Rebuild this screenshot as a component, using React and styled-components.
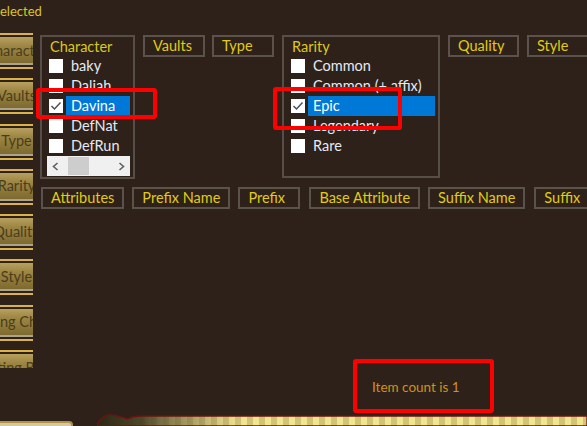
import React from "react";
import styled, { createGlobalStyle } from "styled-components";

const GlobalStyle = createGlobalStyle`
  html, body {
    margin: 0;
    padding: 0;
    background: #2e2119;
  }
`;

const sideTabs = [
  "Character",
  "Vaults",
  "Type",
  "Rarity",
  "Quality",
  "Style",
  "Sorting Choice",
  "Sorting Rank",
];

const characters = [
  { name: "baky" },
  { name: "Daliah" },
  { name: "Davina", checked: true },
  { name: "DefNat" },
  { name: "DefRun" },
];

const rarities = [
  { name: "Common" },
  { name: "Common (+ affix)" },
  { name: "Epic", checked: true },
  { name: "Legendary" },
  { name: "Rare" },
];

const Page = styled.div`
  position: relative;
  width: 587px;
  height: 426px;
  overflow: hidden;
  display: flex;
  flex-direction: column;
  background: #2e2119;
  font-family: Lato, "Open Sans", sans-serif;
  font-size: 14.5px;
`;

const Header = styled.div`
  flex: none;
  height: 33px;
  box-sizing: border-box;
  padding-top: 3px;
  font-size: 13px;
  line-height: 16px;
  color: #dcc81c;
  white-space: nowrap;
`;

const Body = styled.div`
  flex: 1;
  min-height: 0;
  display: flex;
`;

const Sidebar = styled.div`
  flex: none;
  width: 33px;
  height: 335px;
  overflow: hidden;
  display: flex;
  flex-direction: column;
`;

const Tab = styled.div`
  flex: none;
  height: 45.3px;
  display: flex;
  flex-direction: column;
`;

const GoldLine = styled.div`
  height: 2px;
  margin-top: ${(p) => p.$gap || 0}px;
  background: #dbb247;
`;

const TabBody = styled.div`
  height: 26px;
  margin-top: 2px;
  display: flex;
  align-items: center;
  justify-content: center;
  overflow: hidden;
  white-space: nowrap;
  color: #4c3d1c;
  background: linear-gradient(#b8a05e, #9c8644 35%, #7e6a2e);
`;

const GrayLine = styled.div`
  height: 2px;
  background: #aaa38e;
`;

const Main = styled.div`
  flex: 1;
  min-width: 0;
  display: flex;
  flex-direction: column;
  padding: 2px 0 1px 7px;
`;

const FilterRow = styled.div`
  display: flex;
  align-items: flex-start;
  gap: 8px;
  margin-top: ${(p) => p.$top || 0}px;
  margin-left: ${(p) => p.$left || 0}px;
`;

const FilterButton = styled.div`
  flex: none;
  box-sizing: border-box;
  height: 22px;
  min-width: ${(p) => p.$min || 62}px;
  padding: 0 8px;
  margin-left: ${(p) => p.$shift || 0}px;
  border: 2px solid #5a524b;
  color: #e0cb16;
  line-height: 18px;
  white-space: nowrap;
`;

const Panel = styled.div`
  flex: none;
  box-sizing: border-box;
  width: ${(p) => p.$w}px;
  height: ${(p) => p.$h}px;
  border: 2px solid #574e47;
  padding: 0 3px 0 5px;
  display: flex;
  flex-direction: column;
`;

const PanelLabel = styled.div`
  height: 19px;
  padding: 0 0 0 3px;
  line-height: 19px;
  color: #dcc81c;
  white-space: nowrap;
`;

const ItemRow = styled.div`
  height: 20px;
  display: flex;
  align-items: center;
`;

const CheckBox = styled.div`
  flex: none;
  width: 14px;
  height: 14px;
  margin-left: 2px;
  background: #ffffff;
  display: flex;
`;

const ItemLabel = styled.div`
  flex: 1;
  height: 20px;
  margin-left: 3px;
  padding-left: 5px;
  line-height: 19px;
  white-space: nowrap;
  overflow: hidden;
  color: ${(p) => (p.$selected ? "#ffffff" : "#e4e9f4")};
  background: ${(p) => (p.$selected ? "#0078d7" : "transparent")};
`;

const ScrollBar = styled.div`
  height: 20px;
  display: flex;
  align-items: stretch;
  background: #f0f0f0;
`;

const ScrollArrow = styled.div`
  flex: none;
  width: 17px;
  display: flex;
  align-items: center;
  justify-content: center;
`;

const ScrollTrack = styled.div`
  flex: 1;
  display: flex;
  align-items: stretch;
  padding: 1px 0;
`;

const ScrollThumb = styled.div`
  width: 21px;
  margin-left: 4px;
  background: #cdcdcd;
`;

const StatusBox = styled.div`
  flex: none;
  margin-top: auto;
  margin-left: 313px;
  box-sizing: border-box;
  width: 141px;
  height: 54px;
  border: 4px solid #ff0000;
  border-radius: 3px;
  padding: 2px 0 0 15px;
  display: flex;
  align-items: center;
  color: #cf9219;
  font-size: 13.5px;
  white-space: nowrap;
`;

const Highlight = styled.div`
  position: absolute;
  left: ${(p) => p.$x}px;
  top: ${(p) => p.$y}px;
  width: ${(p) => p.$w}px;
  height: ${(p) => p.$h}px;
  box-sizing: border-box;
  border: 4px solid #ff0000;
  border-radius: 3px;
  pointer-events: none;
`;

const Footer = styled.div`
  flex: none;
  height: 12px;
  display: flex;
  align-items: flex-end;
`;

const LeftPlate = styled.div`
  flex: none;
  box-sizing: border-box;
  width: 73px;
  height: 5px;
  border-top: 2px solid #b3914a;
  border-right: 2px solid #b3914a;
  border-top-right-radius: 4px;
  background: #d3c8a0;
`;

const Ornament = styled.svg`
  flex: none;
  display: block;
  margin-left: 24px;
`;

const Check = () => (
  <svg width="14" height="14" viewBox="0 0 14 14">
    <polyline
      points="2.5,7 5.5,10 11.5,3.5"
      fill="none"
      stroke="#505050"
      strokeWidth="1.5"
    />
  </svg>
);

const Chevron = ({ dir }) => (
  <svg width="7" height="9" viewBox="0 0 7 9">
    <polyline
      points={dir === "left" ? "5.5,1 1.5,4.5 5.5,8" : "1.5,1 5.5,4.5 1.5,8"}
      fill="none"
      stroke="#606060"
      strokeWidth="1.6"
    />
  </svg>
);

const CheckList = ({ items }) =>
  items.map((item) => (
    <ItemRow key={item.name}>
      <CheckBox>{item.checked && <Check />}</CheckBox>
      <ItemLabel $selected={item.checked}>{item.name}</ItemLabel>
    </ItemRow>
  ));

const FooterBar = () => (
  <Ornament width="490" height="12" viewBox="0 0 490 12">
    <defs>
      <pattern id="stripes" width="12" height="12" patternUnits="userSpaceOnUse">
        <rect width="12" height="12" fill="#d2c375" />
        <rect width="6" height="12" fill="#f2e590" />
      </pattern>
      <linearGradient id="fade" x1="0" x2="1" y1="0" y2="0">
        <stop offset="0" stopColor="#2b2615" stopOpacity="1" />
        <stop offset="0.09" stopColor="#3f3a22" stopOpacity="0.92" />
        <stop offset="0.2" stopColor="#6e6640" stopOpacity="0.5" />
        <stop offset="0.3" stopColor="#9a9060" stopOpacity="0" />
      </linearGradient>
    </defs>
    <path
      d="M0 12 C2 6 6 1 14 1 C20 1 24 3.5 30 5 C34 3 38 2 44 2 L490 2 L490 12 Z"
      fill="url(#stripes)"
    />
    <path
      d="M0 12 C2 6 6 1 14 1 C20 1 24 3.5 30 5 C34 3 38 2 44 2 L490 2 L490 12 Z"
      fill="url(#fade)"
      stroke="#6a1410"
      strokeWidth="1.3"
    />
  </Ornament>
);

export default function App() {
  return (
    <>
      <GlobalStyle />
      <Page>
        <Header>elected</Header>
        <Body>
          <Sidebar>
            {sideTabs.map((t) => (
              <Tab key={t}>
                <GoldLine />
                <TabBody>{t}</TabBody>
                <GrayLine />
                <GoldLine $gap={2} />
              </Tab>
            ))}
          </Sidebar>
          <Main>
            <FilterRow>
              <Panel $w={95} $h={144}>
                <PanelLabel>Character</PanelLabel>
                <CheckList items={characters} />
                <ScrollBar>
                  <ScrollArrow>
                    <Chevron dir="left" />
                  </ScrollArrow>
                  <ScrollTrack>
                    <ScrollThumb />
                  </ScrollTrack>
                  <ScrollArrow>
                    <Chevron dir="right" />
                  </ScrollArrow>
                </ScrollBar>
              </Panel>
              <FilterButton>Vaults</FilterButton>
              <FilterButton $shift={-1}>Type</FilterButton>
              <Panel $w={158} $h={143}>
                <PanelLabel>Rarity</PanelLabel>
                <CheckList items={rarities} />
              </Panel>
              <FilterButton $min={71}>Quality</FilterButton>
              <FilterButton $min={80}>Style</FilterButton>
            </FilterRow>
            <FilterRow $top={8} $left={1}>
              <FilterButton>Attributes</FilterButton>
              <FilterButton>Prefix Name</FilterButton>
              <FilterButton>Prefix</FilterButton>
              <FilterButton $shift={1}>Base Attribute</FilterButton>
              <FilterButton>Suffix Name</FilterButton>
              <FilterButton $shift={1} $min={80}>Suffix</FilterButton>
            </FilterRow>
            <StatusBox>Item count is 1</StatusBox>
          </Main>
        </Body>
        <Footer>
          <LeftPlate />
          <FooterBar />
        </Footer>
        <Highlight $x={36} $y={88} $w={121} $h={31} />
        <Highlight $x={273} $y={87} $w={129} $h={43} />
      </Page>
    </>
  );
}
